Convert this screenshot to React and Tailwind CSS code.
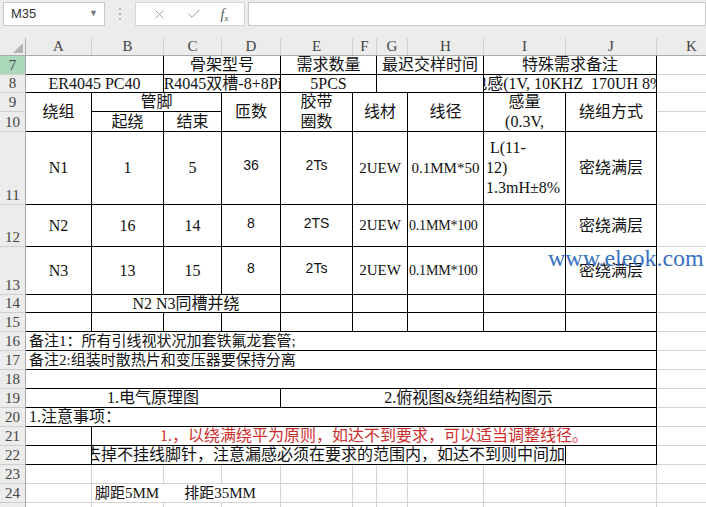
import React from 'react';
import { X, Check } from 'lucide-react';

// border helpers: k = black table border, g = light sheet gridline, n = none
const R = { k: 'border-r border-r-black', g: 'border-r border-r-[#d4d4d4]', n: '' };
const B = { k: 'border-b border-b-black', g: 'border-b border-b-[#d4d4d4]', n: '' };

const Cell = ({ w, r = 'k', b = 'k', className = '', children }) => (
  <div
    className={`${w} ${R[r]} ${B[b]} shrink-0 flex items-center justify-center overflow-hidden whitespace-nowrap ${className}`}
  >
    {children}
  </div>
);

const Row = ({ h, children, className = '' }) => (
  <div className={`flex ${h} ${className}`}>{children}</div>
);

const K = ({ className = '' }) => <Cell w="w-[70px]" r="g" b="g" className={className} />;

const columns = [
  ['A', 'w-[66px]'],
  ['B', 'w-[72px]'],
  ['C', 'w-[58px]'],
  ['D', 'w-[59px]'],
  ['E', 'w-[72px]'],
  ['F', 'w-[24px]'],
  ['G', 'w-[31px]'],
  ['H', 'w-[76px]'],
  ['I', 'w-[82px]'],
  ['J', 'w-[91px]'],
  ['K', 'w-[70px]'],
];

const rowHeads = [
  ['7', 'h-[19px]'],
  ['8', 'h-[18px]'],
  ['9', 'h-[19px]'],
  ['10', 'h-[20px]'],
  ['11', 'h-[73px]'],
  ['12', 'h-[42px]'],
  ['13', 'h-[48px]'],
  ['14', 'h-[18px]'],
  ['15', 'h-[19px]'],
  ['16', 'h-[19px]'],
  ['17', 'h-[19px]'],
  ['18', 'h-[19px]'],
  ['19', 'h-[19px]'],
  ['20', 'h-[19px]'],
  ['21', 'h-[19px]'],
  ['22', 'h-[19px]'],
  ['23', 'h-[19px]'],
  ['24', 'h-[19px]'],
  ['25', 'h-[19px]'],
];

const sans = "font-['Liberation_Sans','Noto_Sans_CJK_SC',sans-serif]";

const EmptyRow = ({ h }) => (
  <Row h={h}>
    {columns.map(([c, w]) => (
      <Cell key={c} w={w} r="g" b="g" />
    ))}
  </Row>
);

const FormulaBar = () => (
  <div className="h-[38px] bg-[#ececec] flex items-start pt-[2px] pl-[3px] font-['Liberation_Sans',sans-serif]">
    <div className="w-[102px] h-[24px] bg-white border border-[#c8c8c8] flex items-center justify-between pl-[7px] pr-[6px] text-[13px] text-[#333]">
      <span>M35</span>
      <span className="text-[9px] text-[#777]">▼</span>
    </div>
    <div className="w-[30px] h-[24px] flex flex-col items-center justify-center gap-[3px]">
      <span className="w-[2px] h-[2px] bg-[#b5b5b5]" />
      <span className="w-[2px] h-[2px] bg-[#b5b5b5]" />
      <span className="w-[2px] h-[2px] bg-[#b5b5b5]" />
    </div>
    <div className="w-[110px] h-[24px] bg-white border border-[#d6d6d6] flex items-center justify-around px-[6px] text-[#9a9a9a]">
      <X size={15} strokeWidth={1.5} />
      <Check size={16} strokeWidth={1.5} />
      <span className="font-['Liberation_Serif',serif] italic text-[14px] text-[#555]">
        f<sub className="text-[9px]">x</sub>
      </span>
    </div>
    <div className="ml-[3px] flex-1 h-[24px] bg-white border border-[#c8c8c8]" />
  </div>
);

export default function App() {
  return (
    <div className="relative w-[706px] h-[507px] overflow-hidden bg-white text-[#111] font-['Liberation_Serif','Noto_Sans_CJK_SC',serif] text-[16px]">
      <FormulaBar />

      {/* column headers */}
      <div className="flex h-[18px] bg-[#ececec] border-b border-b-[#ababab] text-[15px] text-[#444]">
        <div className="w-[26px] shrink-0 border-r border-r-[#ababab] flex items-end justify-end pr-[2px] pb-[2px]">
          <div className="w-0 h-0 border-l-[10px] border-l-transparent border-b-[10px] border-b-[#b4b4b4]" />
        </div>
        {columns.map(([c, w]) => (
          <div key={c} className={`${w} shrink-0 border-r border-r-[#cfcfcf] flex items-center justify-center leading-none`}>
            {c}
          </div>
        ))}
      </div>

      <div className="flex">
        {/* row headers */}
        <div className="w-[26px] shrink-0 flex flex-col border-r border-r-[#ababab] text-[15px] text-[#444]">
          {rowHeads.map(([n, h]) => (
            <div
              key={n}
              className={`${h} shrink-0 flex items-end justify-center leading-[17px] border-b border-b-[#cfcfcf] ${n === '7' ? 'bg-[#a9d8bb]' : 'bg-[#ececec]'}`}
            >
              {n}
            </div>
          ))}
        </div>

        {/* sheet body */}
        <div className="flex flex-col">
          <Row h="h-[19px]">
            <Cell w="w-[138px]" />
            <Cell w="w-[117px]">骨架型号</Cell>
            <Cell w="w-[96px]">需求数量</Cell>
            <Cell w="w-[107px]">最迟交样时间</Cell>
            <Cell w="w-[173px]">特殊需求备注</Cell>
            <K />
          </Row>

          <Row h="h-[18px]">
            <Cell w="w-[138px]">ER4045 PC40</Cell>
            <Cell w="w-[117px]">ER4045双槽-8+8Pin</Cell>
            <Cell w="w-[96px]">5PCS</Cell>
            <Cell w="w-[107px]" />
            <Cell w="w-[173px]" className="whitespace-pre">电感(1V, 10KHZ  170UH 8%)</Cell>
            <K />
          </Row>

          <Row h="h-[39px]">
            <Cell w="w-[66px]">绕组</Cell>
            <div className="flex flex-col w-[130px] shrink-0">
              <Cell w="w-[130px]" className="h-[19px]">管脚</Cell>
              <div className="flex h-[20px]">
                <Cell w="w-[72px]">起绕</Cell>
                <Cell w="w-[58px]">结束</Cell>
              </div>
            </div>
            <Cell w="w-[59px]">匝数</Cell>
            <Cell w="w-[72px]" className="flex-col leading-[20px]">
              <span>胶带</span>
              <span>圈数</span>
            </Cell>
            <Cell w="w-[55px]">线材</Cell>
            <Cell w="w-[76px]">线径</Cell>
            <Cell w="w-[82px]" className="flex-col leading-[20px]">
              <span>感量</span>
              <span>(0.3V,</span>
            </Cell>
            <Cell w="w-[91px]">绕组方式</Cell>
            <div className="flex flex-col w-[70px] shrink-0">
              <K className="h-[19px]" />
              <K className="h-[20px]" />
            </div>
          </Row>

          <Row h="h-[73px]">
            <Cell w="w-[66px]">N1</Cell>
            <Cell w="w-[72px]">1</Cell>
            <Cell w="w-[58px]">5</Cell>
            <Cell w="w-[59px]" className={`${sans} text-[14px] pb-[5px]`}>36</Cell>
            <Cell w="w-[72px]" className={`${sans} text-[14px] pb-[5px]`}>2Ts</Cell>
            <Cell w="w-[55px]" className="text-[15px]">2UEW</Cell>
            <Cell w="w-[76px]" className="text-[15px]">0.1MM*50</Cell>
            <Cell w="w-[82px]" className="flex-col !items-start pl-[2px] leading-[20px] whitespace-pre">
              <span> L(11-</span>
              <span>12)</span>
              <span>1.3mH±8%</span>
            </Cell>
            <Cell w="w-[91px]">密绕满层</Cell>
            <K />
          </Row>

          <Row h="h-[42px]">
            <Cell w="w-[66px]">N2</Cell>
            <Cell w="w-[72px]">16</Cell>
            <Cell w="w-[58px]">14</Cell>
            <Cell w="w-[59px]" className={`${sans} text-[14px] pb-[5px]`}>8</Cell>
            <Cell w="w-[72px]" className={`${sans} text-[14px] pb-[5px]`}>2TS</Cell>
            <Cell w="w-[55px]" className="text-[15px]">2UEW</Cell>
            <Cell w="w-[76px]" className="!justify-start pl-[1px] text-[14px] tracking-[-0.2px]">0.1MM*100</Cell>
            <Cell w="w-[82px]" />
            <Cell w="w-[91px]">密绕满层</Cell>
            <K />
          </Row>

          <Row h="h-[48px]">
            <Cell w="w-[66px]">N3</Cell>
            <Cell w="w-[72px]">13</Cell>
            <Cell w="w-[58px]">15</Cell>
            <Cell w="w-[59px]" className={`${sans} text-[14px] pb-[5px]`}>8</Cell>
            <Cell w="w-[72px]" className={`${sans} text-[14px] pb-[5px]`}>2Ts</Cell>
            <Cell w="w-[55px]" className="text-[15px]">2UEW</Cell>
            <Cell w="w-[76px]" className="!justify-start pl-[1px] text-[14px] tracking-[-0.2px]">0.1MM*100</Cell>
            <Cell w="w-[82px]" />
            <Cell w="w-[91px]">密绕满层</Cell>
            <K />
          </Row>

          <Row h="h-[18px]">
            <Cell w="w-[66px]" />
            <Cell w="w-[189px]">N2 N3同槽并绕</Cell>
            <Cell w="w-[72px]" />
            <Cell w="w-[55px]" />
            <Cell w="w-[76px]" />
            <Cell w="w-[82px]" />
            <Cell w="w-[91px]" />
            <K />
          </Row>

          <Row h="h-[19px]">
            <Cell w="w-[66px]" />
            <Cell w="w-[72px]" />
            <Cell w="w-[58px]" />
            <Cell w="w-[59px]" />
            <Cell w="w-[72px]" />
            <Cell w="w-[55px]" />
            <Cell w="w-[76px]" />
            <Cell w="w-[82px]" />
            <Cell w="w-[91px]" />
            <K />
          </Row>

          <Row h="h-[19px]">
            <Cell w="w-[631px]" className="!justify-start pl-[3px] text-[15px]">
              备注1：所有引线视状况加套铁氟龙套管;
            </Cell>
            <K />
          </Row>

          <Row h="h-[19px]">
            <Cell w="w-[631px]" className="!justify-start pl-[3px] text-[15px]">
              备注2:组装时散热片和变压器要保持分离
            </Cell>
            <K />
          </Row>

          <Row h="h-[19px]">
            <Cell w="w-[631px]" />
            <K />
          </Row>

          <Row h="h-[19px]">
            <Cell w="w-[255px]">1.电气原理图</Cell>
            <Cell w="w-[376px]">2.俯视图&amp;绕组结构图示</Cell>
            <K />
          </Row>

          <Row h="h-[19px]">
            <Cell w="w-[631px]" className="!justify-start pl-[3px]">1.注意事项：</Cell>
            <K />
          </Row>

          <Row h="h-[19px]">
            <Cell w="w-[66px]" />
            <Cell w="w-[565px]" className="text-[#cf2e2e]">
              1.，以绕满绕平为原则，如达不到要求，可以适当调整线径。
            </Cell>
            <K />
          </Row>

          <Row h="h-[19px]">
            <Cell w="w-[66px]" />
            <Cell w="w-[474px]" className="!justify-end">
              去掉不挂线脚针，注意漏感必须在要求的范围内，如达不到则中间加
            </Cell>
            <Cell w="w-[91px]" />
            <K />
          </Row>

          <EmptyRow h="h-[19px]" />

          <Row h="h-[19px]">
            <Cell w="w-[66px]" r="g" b="g" />
            <Cell w="w-[189px]" r="g" b="g" className="!justify-start pl-[3px] gap-[25px] text-[15px]">
              <span>脚距5MM</span>
              <span>排距35MM</span>
            </Cell>
            <Cell w="w-[72px]" r="g" b="g" />
            <Cell w="w-[24px]" r="g" b="g" />
            <Cell w="w-[31px]" r="g" b="g" />
            <Cell w="w-[76px]" r="g" b="g" />
            <Cell w="w-[82px]" r="g" b="g" />
            <Cell w="w-[91px]" r="g" b="g" />
            <K />
          </Row>

          <EmptyRow h="h-[19px]" />
        </div>
      </div>

      {/* watermark */}
      <div className="absolute left-[548px] top-[240px] text-[24px] text-[#3a72c2] font-['Liberation_Serif',serif] whitespace-nowrap">
        www.eleok.com
      </div>
    </div>
  );
}
